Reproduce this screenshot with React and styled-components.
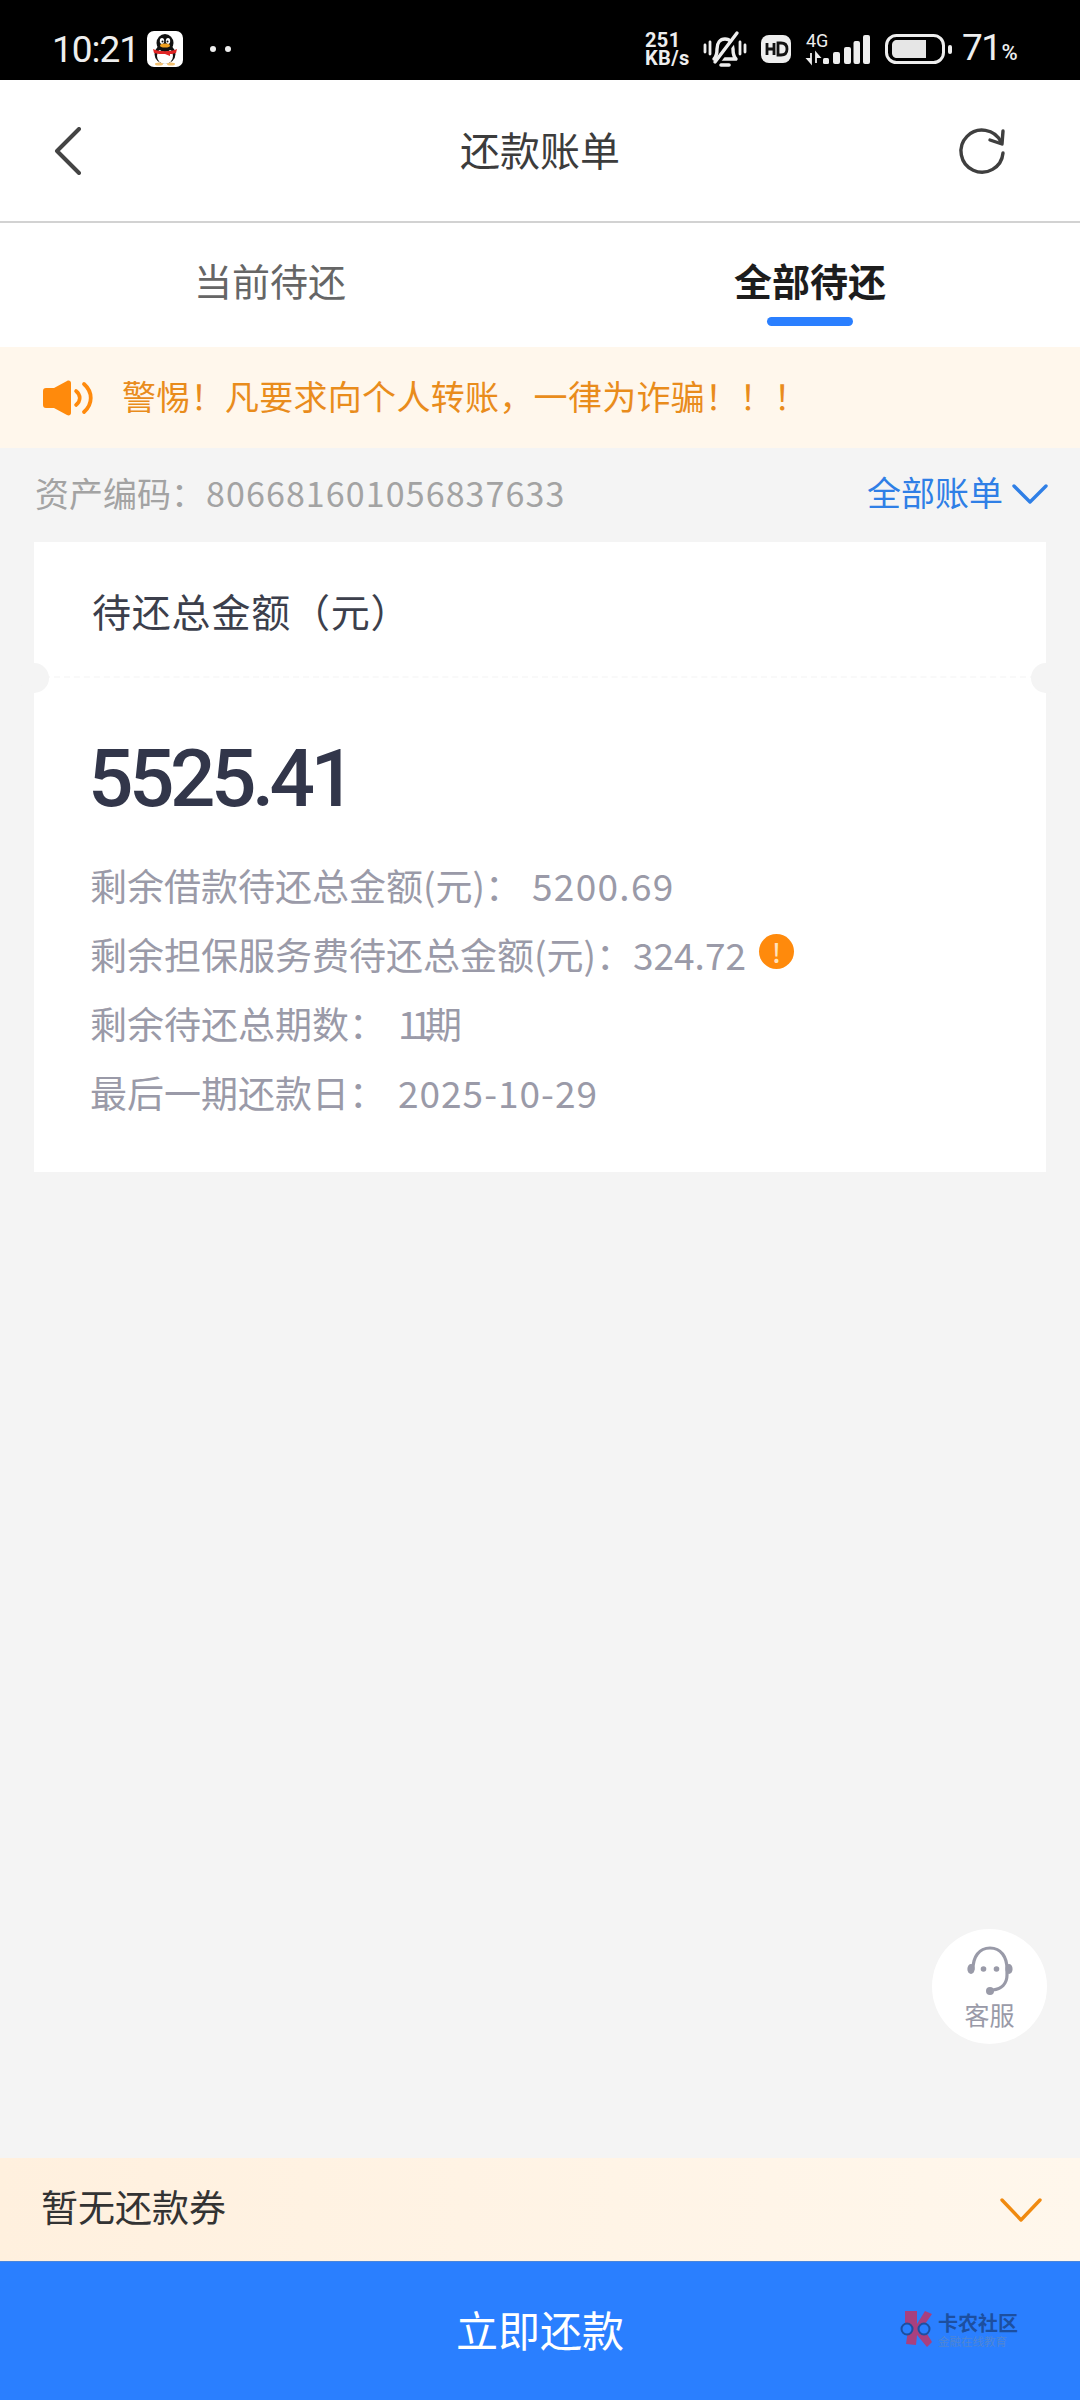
import React from 'react';
import styled, { createGlobalStyle } from 'styled-components';

const cjk = '"Noto Sans CJK SC", "Noto Sans", sans-serif';

const Global = createGlobalStyle`
  html, body { margin: 0; padding: 0; background: #f4f4f4; }
  * { box-sizing: border-box; }
  body { font-family: ${cjk}; }
`;

const Page = styled.div`
  position: relative;
  width: 1080px;
  height: 2400px;
  display: flex;
  flex-direction: column;
  background: #f4f4f4;
  overflow: hidden;
`;

const StatusBar = styled.div`
  height: 80px;
  background: #000;
  color: #eee;
  display: flex;
  align-items: center;
  justify-content: space-between;
  padding: 18px 64px 0 52px;
  font-family: Roboto, "Liberation Sans", sans-serif;
`;
const StatusLeft = styled.div`
  display: flex;
  align-items: center;
`;
const StatusRight = styled.div`
  display: flex;
  align-items: center;
`;
const Time = styled.span`
  font-size: 37px;
  line-height: 44px;
  letter-spacing: -1px;
  width: 95px;
  margin-top: 2px;
`;
const Dots = styled.span`
  display: flex;
  gap: 9px;
  margin-left: 27px;
  i { width: 6px; height: 6px; border-radius: 50%; background: #eee; display: block; }
`;
const Speed = styled.span`
  width: 50px;
  font-size: 20px;
  font-weight: 700;
  line-height: 18px;
  letter-spacing: 0.4px;
  white-space: nowrap;
`;
const StatusIcon = styled.svg`
  display: block;
  flex: none;
  overflow: visible;
  margin-left: ${p => p.$gap || 0}px;
`;
const Signal4G = styled.span`
  position: absolute;
  left: 0;
  top: -2px;
  font-size: 18px;
  line-height: 20px;
`;
const SignalWrap = styled.div`
  position: relative;
  width: 64px;
  height: 32px;
  margin-left: 15px;
  flex: none;
`;
const Percent = styled.span`
  margin: 3px -2px 0 10px;
  font-size: 37px;
  line-height: 44px;
  letter-spacing: -1.5px;
  width: 56px;
  white-space: nowrap;
  small { font-size: 22px; font-weight: 500; letter-spacing: 0; margin-left: 1px; }
`;

const Nav = styled.div`
  height: 143px;
  background: #fff;
  border-bottom: 2px solid #d2d2d2;
  display: flex;
  align-items: center;
  justify-content: space-between;
  padding: 0 72px 0 54px;
  position: relative;
`;
const NavTitle = styled.div`
  position: absolute;
  left: 0;
  right: 0;
  top: 0;
  bottom: 4px;
  display: flex;
  align-items: center;
  justify-content: center;
  font-size: 40px;
  color: #3c3c3c;
  pointer-events: none;
`;

const Tabs = styled.div`
  height: 124px;
  background: #fff;
  display: grid;
  grid-template-columns: 1fr 1fr;
`;
const Tab = styled.div`
  display: flex;
  flex-direction: column;
  align-items: center;
  padding-top: 29px;
  font-size: 38px;
  line-height: 56px;
  color: ${p => (p.$active ? '#1d1d1d' : '#666')};
  font-weight: ${p => (p.$active ? 700 : 400)};
`;
const TabLine = styled.div`
  width: 86px;
  height: 9px;
  border-radius: 5px;
  margin-top: 9px;
  background: ${p => (p.$active ? '#2a7fff' : 'transparent')};
`;

const Notice = styled.div`
  height: 101px;
  background: #fff7ec;
  display: flex;
  align-items: center;
  padding-left: 42px;
  font-size: 34px;
  color: #e98c1c;
`;
const NoticeText = styled.span`
  margin: -5px 0 0 29px;
  letter-spacing: 0.3px;
  white-space: nowrap;
`;

const AssetRow = styled.div`
  height: 94px;
  display: flex;
  align-items: center;
  justify-content: space-between;
  padding: 0 32px 0 35px;
  font-size: 34px;
`;
const AssetCode = styled.span`
  color: #a3a3a3;
  margin-top: -6px;
  b { font-weight: 400; letter-spacing: 1.1px; margin-left: 1px; }
`;
const AllBills = styled.span`
  display: flex;
  align-items: center;
  gap: 9px;
  color: #2f7fe6;
  line-height: 50px;
  margin-top: -6px;
  svg { margin-top: 4px; }
`;

const Card = styled.div`
  margin: 0 34px;
  height: 630px;
  background: #fff;
  position: relative;
`;
const CardHead = styled.div`
  height: 136px;
  padding: 40px 0 0 58px;
  font-size: 39px;
  line-height: 56px;
  letter-spacing: 0.8px;
  color: #3c3f4c;
  border-bottom: 2px dashed #f9f9f9;
`;
const Notch = styled.div`
  position: absolute;
  top: 121px;
  ${p => (p.$right ? 'right: -15px;' : 'left: -15px;')}
  width: 30px;
  height: 30px;
  border-radius: 50%;
  background: #f4f4f4;
`;
const CardBody = styled.div`
  padding: 56px 0 0 54px;
`;
const Amount = styled.div`
  font-family: Roboto, "Liberation Sans", Arial, sans-serif;
  font-weight: 500;
  font-size: 80px;
  line-height: 90px;
  letter-spacing: -4.5px;
  color: #32364a;
`;
const Details = styled.div`
  margin-top: 26px;
  display: flex;
  flex-direction: column;
  padding-left: 2px;
`;
const Detail = styled.div`
  height: 69px;
  display: flex;
  align-items: center;
  font-size: 37px;
  color: #9a9aa8;
  white-space: nowrap;
`;
const DetailValue = styled.span`
  margin-left: ${p => p.$gap}px;
  letter-spacing: ${p => p.$spacing || 0}px;
`;
const Warn = styled.span`
  width: 35px;
  height: 35px;
  border-radius: 50%;
  background: #ff8a0c;
  color: #ffe2bd;
  margin: -4px 0 0 13px;
  display: flex;
  align-items: center;
  justify-content: center;
  font-size: 26px;
  font-weight: 500;
  line-height: 35px;
`;

const Spacer = styled.div`
  flex: 1;
`;
const Coupon = styled.div`
  height: 103px;
  background: linear-gradient(90deg, #fff0de 0%, #fff7ec 100%);
  display: flex;
  align-items: center;
  justify-content: space-between;
  padding: 0 38px 0 41px;
  font-size: 37px;
  color: #333;
`;
const CouponText = styled.span`
  margin-top: -8px;
`;
const PayButton = styled.div`
  height: 139px;
  background: #2a7fff;
  border-top: 1px solid #4a86dc;
  display: flex;
  align-items: center;
  justify-content: center;
  color: #fff;
  font-size: 42px;
  padding-bottom: 6px;
`;

const Help = styled.div`
  position: absolute;
  left: 932px;
  top: 1929px;
  width: 115px;
  height: 115px;
  border-radius: 50%;
  background: #fff;
  display: flex;
  flex-direction: column;
  align-items: center;
  padding-top: 16px;
  color: #999aa8;
  font-size: 25px;
  line-height: 34px;
`;
const Watermark = styled.div`
  position: absolute;
  left: 899px;
  top: 2310px;
  display: flex;
  align-items: center;
  gap: 3px;
  color: #1d4f9f;
`;
const MarkText = styled.div`
  display: flex;
  flex-direction: column;
  font-size: 20px;
  line-height: 24px;
  font-weight: 700;
  white-space: nowrap;
  small { font-size: 11.5px; line-height: 13px; font-weight: 400; color: #4f86d4; }
`;

const QQ = () => (
  <StatusIcon $gap={0} width="36" height="36" viewBox="0 0 36 36">
    <rect width="36" height="36" rx="7" fill="#fff" />
    <ellipse cx="18" cy="23" rx="10.5" ry="10" fill="#111" />
    <ellipse cx="18" cy="25" rx="8" ry="8" fill="#fff" />
    <ellipse cx="18" cy="12" rx="8.5" ry="9" fill="#111" />
    <ellipse cx="15" cy="10" rx="2.2" ry="3" fill="#fff" />
    <ellipse cx="21" cy="10" rx="2.2" ry="3" fill="#fff" />
    <circle cx="15.5" cy="10.5" r="1" fill="#111" />
    <circle cx="20.5" cy="10.5" r="1" fill="#111" />
    <ellipse cx="18" cy="14.5" rx="5" ry="2" fill="#f0a020" />
    <path d="M6 18c6 3 18 3 24 0l-1 4c-3 1-5 1-6 1v2l-5-2c-4 0-8 0-11-1z" fill="#e02525" />
    <ellipse cx="12" cy="33" rx="4" ry="1.5" fill="#f2c070" />
    <ellipse cx="24" cy="33" rx="4" ry="1.5" fill="#f2c070" />
  </StatusIcon>
);

const Bell = () => (
  <StatusIcon $gap={8} width="44" height="36" viewBox="0 0 44 36" fill="none" stroke="#eee">
    <path d="M11 28c3-3 3-6 3-10 0-6 3-10 8-10s8 4 8 10c0 4 0 7 3 10z" strokeWidth="3.4" strokeLinejoin="round" />
    <path d="M18 34h8" strokeWidth="3.6" strokeLinecap="round" />
    <path d="M12 31L34 2" strokeWidth="3.6" stroke="#000" transform="translate(2.5 1.5)" />
    <path d="M12 31L34 2" strokeWidth="3.4" strokeLinecap="round" />
    <path d="M2 14v7M7 11v12M37 11v12M42 14v7" strokeWidth="2.8" strokeLinecap="round" />
  </StatusIcon>
);

const HD = () => (
  <StatusIcon $gap={14} width="30" height="28" viewBox="0 0 30 28">
    <rect width="30" height="28" rx="8" fill="#eee" />
    <path d="M6 8v12M13 8v12M6 14h7" stroke="#111" strokeWidth="2.8" fill="none" />
    <path d="M17 8v12h3c4 0 6-2 6-6s-2-6-6-6z" stroke="#111" strokeWidth="2.8" fill="none" />
  </StatusIcon>
);

const Signal = () => (
  <SignalWrap>
    <Signal4G>4G</Signal4G>
    <StatusIcon width="64" height="32" viewBox="0 0 64 32">
      <path d="M5 20v10M5 30l-3.5-4H5zM10 20v10M10 20l3.5 4H10z" stroke="#eee" strokeWidth="1.8" fill="#eee" />
      <rect x="17" y="25" width="6" height="6" rx="1.5" fill="#eee" />
      <rect x="27" y="19" width="7" height="12" rx="2" fill="#eee" />
      <rect x="38" y="14" width="7" height="17" rx="2" fill="#eee" />
      <rect x="47.5" y="8" width="6.5" height="23" rx="2" fill="#eee" />
      <rect x="57" y="2" width="7" height="29" rx="2" fill="#eee" />
    </StatusIcon>
  </SignalWrap>
);

const Battery = () => (
  <StatusIcon $gap={15} width="67" height="30" viewBox="0 0 67 30">
    <rect x="1.5" y="1.5" width="57" height="27" rx="10" fill="none" stroke="#eee" strokeWidth="3" />
    <path d="M12 6h29v18H12c-3 0-5-2-5-5v-8c0-3 2-5 5-5z" fill="#e6e6e6" />
    <rect x="63" y="11" width="4" height="9" rx="2" fill="#eee" />
  </StatusIcon>
);

const Back = () => (
  <svg width="28" height="48" viewBox="0 0 28 48" fill="none">
    <path d="M25 2L3 24l22 22" stroke="#444" strokeWidth="4" strokeLinecap="round" strokeLinejoin="round" />
  </svg>
);

const Refresh = () => (
  <svg width="52" height="52" viewBox="0 0 52 52" fill="none">
    <path d="M45 17A21.05 21.05 0 1 0 47 28" stroke="#3f3f3f" strokeWidth="3.4" strokeLinecap="round" />
    <path d="M47 6L46 19 34 15" stroke="#3f3f3f" strokeWidth="3.4" strokeLinecap="round" strokeLinejoin="round" />
  </svg>
);

const Speaker = () => (
  <svg width="51" height="36" viewBox="0 0 51 36" fill="none">
    <path d="M1 11c0-2 1-3 3-3h8L25 1c2-1 4 0 4 2v30c0 2-2 3-4 2L12 28H4c-2 0-3-1-3-3z" fill="#ff8a0c" />
    <path d="M34 11c5 4 5 10 0 14" stroke="#ff8a0c" strokeWidth="3.6" strokeLinecap="round" />
    <path d="M42 4c9 8 9 20 0 28" stroke="#ff8a0c" strokeWidth="3.8" strokeLinecap="round" />
  </svg>
);

const Chevron = ({ w, h, color }) => (
  <svg width={w} height={h} viewBox={`0 0 ${w} ${h}`} fill="none">
    <path d={`M2 2L${w / 2} ${h - 2}L${w - 2} 2`} stroke={color} strokeWidth="3.4" strokeLinecap="round" strokeLinejoin="round" />
  </svg>
);

const Headset = () => (
  <svg width="48" height="52" viewBox="0 0 48 52" fill="none">
    <path d="M7 24C7 12 13 3 24 3s17 9 17 21v6c0 9-6 14-14 15" stroke="#999aa8" strokeWidth="3.2" strokeLinecap="round" />
    <ellipse cx="5" cy="24" rx="3.6" ry="5" fill="#999aa8" />
    <ellipse cx="43" cy="24" rx="3.6" ry="5" fill="#999aa8" />
    <circle cx="24" cy="46" r="4" fill="#999aa8" />
    <circle cx="17.5" cy="24" r="2.8" fill="#999aa8" />
    <circle cx="30.5" cy="24" r="2.8" fill="#999aa8" />
  </svg>
);

const MarkLogo = () => (
  <svg width="36" height="38" viewBox="0 0 36 38" fill="none">
    <path d="M6 1H18V14L26 1L33 4L24 17L33 32L28 37L18 25L17 35L7 34L9 20L6 15z" fill="#a8407f" />
    <circle cx="8" cy="19" r="5.5" fill="#2a7fff" stroke="#1d4f9f" strokeWidth="2" />
    <circle cx="25" cy="19" r="5.5" fill="#2a7fff" stroke="#1d4f9f" strokeWidth="2" />
  </svg>
);

export default function App() {
  return (
    <Page>
      <Global />
      <StatusBar>
        <StatusLeft>
          <Time>10:21</Time>
          <QQ />
          <Dots><i /><i /></Dots>
        </StatusLeft>
        <StatusRight>
          <Speed>251<br />KB/s</Speed>
          <Bell />
          <HD />
          <Signal />
          <Battery />
          <Percent>71<small>%</small></Percent>
        </StatusRight>
      </StatusBar>
      <Nav>
        <NavTitle>还款账单</NavTitle>
        <Back />
        <Refresh />
      </Nav>
      <Tabs>
        <Tab>当前待还<TabLine /></Tab>
        <Tab $active>全部待还<TabLine $active /></Tab>
      </Tabs>
      <Notice>
        <Speaker />
        <NoticeText>警惕！凡要求向个人转账，一律为诈骗！！！</NoticeText>
      </Notice>
      <AssetRow>
        <AssetCode>资产编码：<b>806681601056837633</b></AssetCode>
        <AllBills>全部账单<Chevron w={36} h={20} color="#2f7fe6" /></AllBills>
      </AssetRow>
      <Card>
        <CardHead>待还总金额（元）</CardHead>
        <Notch />
        <Notch $right />
        <CardBody>
          <Amount>5525.41</Amount>
          <Details>
            <Detail>剩余借款待还总金额(元)：<DetailValue $gap={10} $spacing={1.3}>5200.69</DetailValue></Detail>
            <Detail>剩余担保服务费待还总金额(元)：<DetailValue $gap={0}>324.72</DetailValue><Warn>!</Warn></Detail>
            <Detail>剩余待还总期数：<DetailValue $gap={12} $spacing={-7}>11期</DetailValue></Detail>
            <Detail>最后一期还款日：<DetailValue $gap={12} $spacing={1}>2025-10-29</DetailValue></Detail>
          </Details>
        </CardBody>
      </Card>
      <Spacer />
      <Coupon><CouponText>暂无还款券</CouponText><Chevron w={42} h={24} color="#f08a10" /></Coupon>
      <PayButton>立即还款</PayButton>
      <Help>
        <Headset />
        客服
      </Help>
      <Watermark>
        <MarkLogo />
        <MarkText>卡农社区<small>金融在线教育</small></MarkText>
      </Watermark>
    </Page>
  );
}
